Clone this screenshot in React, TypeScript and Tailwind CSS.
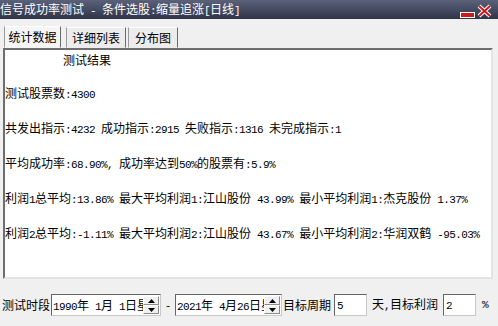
import React from 'react';

// SimSun-like mix: ASCII runs are half width (6px), CJK runs are 12px
const Mix: React.FC<{ s: string }> = ({ s }) => {
  const parts = s.match(/[\x00-\x7f]+|[^\x00-\x7f]+/g) || [];
  return (
    <>
      {parts.map((p, i) =>
        /^[\x00-\x7f]/.test(p) ? (
          <span key={i} className="font-['Liberation_Mono',monospace] text-[11px] tracking-[-0.6px]">
            {p}
          </span>
        ) : (
          <span key={i}>{p}</span>
        )
      )}
    </>
  );
};

const Spinner: React.FC = () => (
  <div className="flex flex-col w-[16px] h-[18px] shrink-0 mt-[1px]">
    <div className="flex-1 flex items-center justify-center bg-[#f0f0f0] border border-t-white border-l-white border-r-[#8a8a8a] border-b-[#8a8a8a]">
      <svg width="7" height="4" viewBox="0 0 7 4">
        <path d="M0 4 L3.5 0 L7 4 Z" fill="#000" />
      </svg>
    </div>
    <div className="flex-1 flex items-center justify-center bg-[#f0f0f0] border border-t-white border-l-white border-r-[#8a8a8a] border-b-[#8a8a8a]">
      <svg width="7" height="4" viewBox="0 0 7 4">
        <path d="M0 0 L3.5 4 L7 0 Z" fill="#000" />
      </svg>
    </div>
  </div>
);

const DateBox: React.FC<{ value: string; w: string }> = ({ value, w }) => (
  <div className={`${w} h-[22px] flex bg-white border border-t-[#646464] border-l-[#646464] border-r-[#c8c8c8] border-b-[#c8c8c8] pr-[1px]`}>
    <div className="flex-1 overflow-hidden whitespace-pre pl-[1px] leading-[20px]">
      <Mix s={value} />
    </div>
    <Spinner />
  </div>
);

const NumBox: React.FC<{ value: string }> = ({ value }) => (
  <div className="w-[33px] h-[22px] bg-white border border-t-[#646464] border-l-[#646464] border-r-[#c8c8c8] border-b-[#c8c8c8] pl-[2px] leading-[18px]">
    <Mix s={value} />
  </div>
);

const lines = [
  '测试股票数:4300',
  '共发出指示:4232 成功指示:2915 失败指示:1316 未完成指示:1',
  '平均成功率:68.90%, 成功率达到50%的股票有:5.9%',
  '利润1总平均:13.86% 最大平均利润1:江山股份 43.99% 最小平均利润1:杰克股份 1.37%',
  '利润2总平均:-1.11% 最大平均利润2:江山股份 43.67% 最小平均利润2:华润双鹤 -95.03%',
];

const App: React.FC = () => {
  return (
    <div className="w-[498px] h-[326px] overflow-hidden bg-[#f0f0f0] flex flex-col text-[12px] text-black font-['Noto_Sans_CJK_SC',sans-serif]">
      {/* Title bar */}
      <div className="h-[19px] flex items-center justify-between bg-gradient-to-b from-[#5a6179] via-[#454b62] to-[#2f3448] text-white leading-[19px]">
        <div className="whitespace-pre">
          <Mix s="信号成功率测试 - 条件选股:缩量追涨[日线]" />
        </div>
        <div className="flex items-end gap-[2px] pr-[6px] h-full pb-[1px]">
          <svg width="15" height="6" viewBox="0 0 15 6">
            <rect x="0.5" y="0.5" width="14" height="5" fill="#d01818" stroke="#fff" strokeWidth="1" />
          </svg>
          <svg width="15" height="14" viewBox="0 0 15 14">
            <path d="M2 2 L13 12 M13 2 L2 12" stroke="#fff" strokeWidth="4" />
            <path d="M2 2 L13 12 M13 2 L2 12" stroke="#d01818" strokeWidth="2" />
          </svg>
        </div>
      </div>

      {/* Tabs */}
      <div className="flex items-end pl-[4px] pt-[7px] h-[29px]">
        <div className="w-[57px] h-[22px] flex items-center justify-center bg-[#f5f5f5] border border-t-white border-l-[#9a9a9a] border-r-[#6a6a6a] border-b-transparent">
          统计数据
        </div>
        <div className="ml-[5px] w-[60px] h-[21px] flex items-center justify-center bg-[#ececec] border border-t-white border-l-[#9a9a9a] border-r-[#6a6a6a] border-b-transparent">
          详细列表
        </div>
        <div className="ml-[2px] w-[50px] h-[21px] flex items-center justify-center bg-[#ececec] border border-t-white border-l-[#9a9a9a] border-r-[#6a6a6a] border-b-transparent">
          分布图
        </div>
      </div>

      {/* Result panel */}
      <div className="ml-[3px] w-[490px] h-[231px] bg-white border-2 border-t-[#6e6e6e] border-l-[#6e6e6e] border-r-[#e4e4e4] border-b-[#e4e4e4]">
        <div className="flex flex-col gap-[17px] pt-[2px] leading-[16px] whitespace-pre">
          <div className="pl-[58px]">测试结果</div>
          {lines.map((l, i) => (
            <div key={i}>
              <Mix s={l} />
            </div>
          ))}
        </div>
      </div>

      {/* Bottom bar */}
      <div className="flex items-center pl-[2px] mt-[15px] h-[22px] whitespace-pre">
        <span>测试时段</span>
        <div className="ml-[1px]">
          <DateBox value="1990年 1月 1日星" w="w-[110px]" />
        </div>
        <span className="ml-[5px] w-[8px]">-</span>
        <div className="ml-[1px]">
          <DateBox value="2021年 4月26日星" w="w-[107px]" />
        </div>
        <span className="ml-[1px]">目标周期</span>
        <div className="ml-[3px]">
          <NumBox value="5" />
        </div>
        <span className="ml-[5px]">
          <Mix s="天," />
          目标利润
        </span>
        <div className="ml-[5px]">
          <NumBox value="2" />
        </div>
        <span className="ml-[6px] text-[10px]">
          <Mix s="%" />
        </span>
      </div>
    </div>
  );
};

export default App;
